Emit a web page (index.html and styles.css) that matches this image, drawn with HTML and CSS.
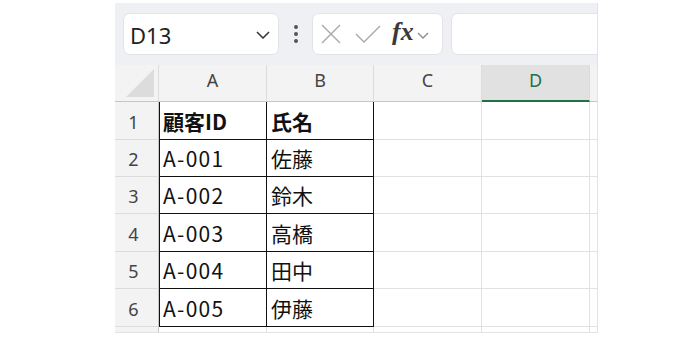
FILE: index.html
```html
<!DOCTYPE html>
<html lang="ja">
<head>
<meta charset="utf-8">
<title>Sheet</title>
<link rel="stylesheet" href="styles.css">
</head>
<body>
<div class="app">
  <div class="toolbar">
    <div class="namebox">
      <span class="ref">D13</span>
      <svg class="chev" width="14" height="8" viewBox="0 0 14 8"><path d="M1 1 L7 7 L13 1" fill="none" stroke="#333" stroke-width="1.5"/></svg>
    </div>
    <div class="dots"><i></i><i></i><i></i></div>
    <div class="fxbox">
      <svg class="ico" width="20" height="20" viewBox="0 0 20 20"><path d="M1 1 L19 19 M19 1 L1 19" stroke="#a8a8a8" stroke-width="1.4" fill="none"/></svg>
      <svg class="ico" width="26" height="18" viewBox="0 0 26 18"><path d="M1 9 L9 17 L25 1" stroke="#a8a8a8" stroke-width="1.4" fill="none"/></svg>
      <span class="fx">fx</span>
      <svg class="chev2" width="12" height="7" viewBox="0 0 12 7"><path d="M1 1 L6 6 L11 1" fill="none" stroke="#8a8a8a" stroke-width="1.3"/></svg>
    </div>
    <div class="formula"></div>
  </div>
  <div class="grid">
    <div class="corner"><span class="tri"></span></div>
    <div class="ch">A</div>
    <div class="ch">B</div>
    <div class="ch">C</div>
    <div class="ch sel">D</div>
    <div class="ch edge"></div>

    <div class="rh">1</div>
    <div class="c d bold first">顧客ID</div>
    <div class="c d bold">氏名</div>
    <div class="c"></div><div class="c"></div><div class="c edge"></div>

    <div class="rh">2</div>
    <div class="c d first id">A-001</div>
    <div class="c d">佐藤</div>
    <div class="c"></div><div class="c"></div><div class="c edge"></div>

    <div class="rh">3</div>
    <div class="c d first id">A-002</div>
    <div class="c d">鈴木</div>
    <div class="c"></div><div class="c"></div><div class="c edge"></div>

    <div class="rh">4</div>
    <div class="c d first id">A-003</div>
    <div class="c d">高橋</div>
    <div class="c"></div><div class="c"></div><div class="c edge"></div>

    <div class="rh">5</div>
    <div class="c d first id">A-004</div>
    <div class="c d">田中</div>
    <div class="c"></div><div class="c"></div><div class="c edge"></div>

    <div class="rh">6</div>
    <div class="c d first id">A-005</div>
    <div class="c d">伊藤</div>
    <div class="c"></div><div class="c"></div><div class="c edge"></div>

    <div class="rh"></div>
    <div class="c"></div><div class="c"></div><div class="c"></div><div class="c"></div><div class="c edge"></div>
  </div>
</div>
</body>
</html>
```

FILE: styles.css
```css
* { box-sizing: border-box; }
html, body { margin: 0; padding: 0; background: #fff; }
body { font-family: "Noto Sans", "Noto Sans CJK JP", sans-serif; }

.app {
  margin: 3px 0 0 115px;
  width: 483px;
  height: 330px;
  border-right: 1px solid #e3e3e3;
  border-bottom: 1px solid #e3e3e3;
  overflow: hidden;
  background: #fff;
}

.toolbar {
  height: 62px;
  background: #eef0f3;
  display: flex;
  align-items: center;
  padding: 0 0 0 8px;
  white-space: nowrap;
}

.namebox {
  flex: 0 0 156px;
  height: 42px;
  background: #fff;
  border: 1px solid #e2e4e8;
  border-radius: 7px;
  display: flex;
  align-items: center;
  justify-content: space-between;
  padding: 2px 8px 0 6px;
}
.ref { font-size: 22px; color: #222; font-family: "Noto Sans", sans-serif; }
.chev { margin-top: 0; }

.dots {
  flex: 0 0 33px;
  display: flex;
  flex-direction: column;
  align-items: center;
  gap: 3px;
}
.dots i { display: block; width: 4px; height: 4px; border-radius: 50%; background: #555; }

.fxbox {
  flex: 0 0 131px;
  height: 42px;
  background: #fff;
  border: 1px solid #e2e4e8;
  border-radius: 7px;
  display: flex;
  align-items: center;
  padding: 0 0 0 8px;
}
.fxbox .ico:first-child { margin-right: 14px; }
.fx {
  font-family: "Liberation Serif", serif;
  font-style: italic;
  font-weight: bold;
  font-size: 26px;
  color: #3a3a3a;
  margin: -4px 3px 0 11px;
}
.chev2 { margin-top: 2px; }

.formula {
  flex: 0 0 160px;
  height: 42px;
  margin-left: 8px;
  background: #fff;
  border: 1px solid #e2e4e8;
  border-radius: 7px;
}

.grid {
  display: grid;
  grid-template-columns: 44px 108px 107px 108px 108px 8px;
  grid-template-rows: 37px 38px 37px 37px 38px 37px 38px 10px;
}

.corner, .ch, .rh {
  background: #f3f3f3;
  color: #444;
  border-right: 1px solid #dcdcdc;
  border-bottom: 1px solid #c6c6c6;
}
.corner { position: relative; }
.tri {
  position: absolute;
  right: 4px;
  bottom: 4px;
  width: 0; height: 0;
  border-left: 28px solid transparent;
  border-bottom: 28px solid #dcdcdc;
}

.ch {
  display: flex;
  align-items: center;
  justify-content: center;
  padding-bottom: 6px;
  font-size: 18px;
  font-family: "Noto Sans", sans-serif;
}
.ch.sel {
  background: #e1e1e1;
  color: #1e7145;
  border-bottom: 2px solid #1e7145;
}
.ch.edge { background: #f3f3f3; border-right: none; }

.rh {
  display: flex;
  align-items: center;
  justify-content: center;
  padding: 2px 6px 0 0;
  font-size: 18px;
  border-bottom: 1px solid #dcdcdc;
  border-right: 1px solid #c6c6c6;
}

.c {
  border-right: 1px solid #e1e1e1;
  border-bottom: 1px solid #e1e1e1;
  display: flex;
  align-items: center;
  padding-left: 4px;
  font-size: 21px;
  color: #111;
  font-family: "Noto Sans CJK JP", sans-serif;
  white-space: nowrap;
}
.c.id { letter-spacing: 1.3px; }
.c.edge { border-right: none; }
.c.d {
  border-right: 1px solid #111;
  border-bottom: 1px solid #111;
}
.c.first { box-shadow: inset 1px 0 0 #111; }
.bold { font-weight: bold; }
```
